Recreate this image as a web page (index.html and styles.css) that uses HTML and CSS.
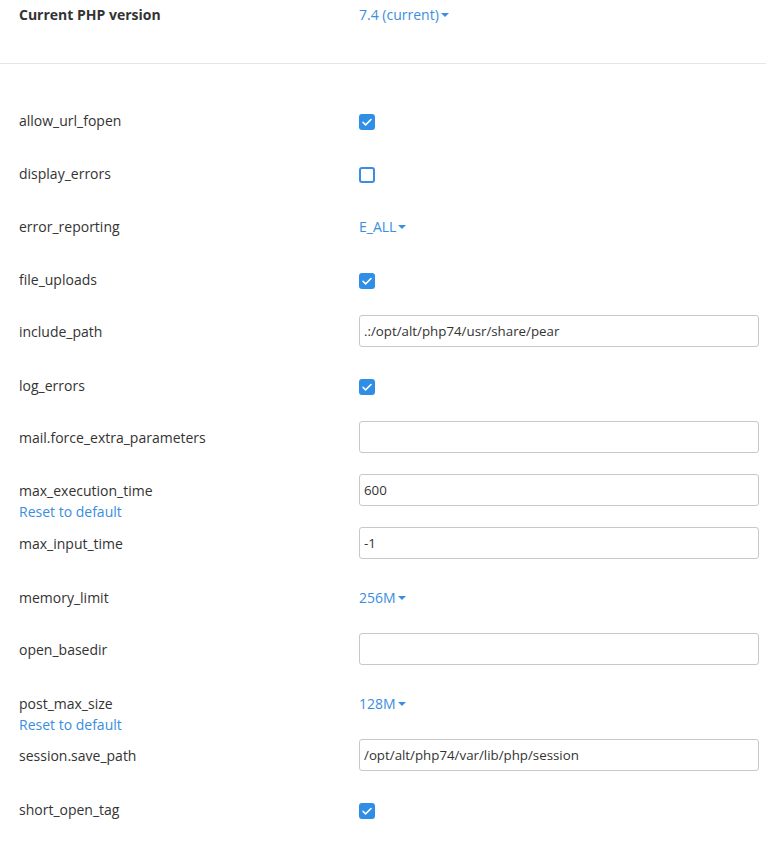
FILE: index.html
```html
<!DOCTYPE html>
<html>
<head>
<meta charset="utf-8">
<link rel="stylesheet" href="styles.css">
</head>
<body>
<div class="page">
  <div class="header">
    <div class="label bold">Current PHP version</div>
    <div class="value"><a class="dropdown">7.4 (current)<span class="caret"></span></a></div>
  </div>
  <div class="divider"></div>
  <div class="list">
    <div class="row"><div class="label">allow_url_fopen</div><div class="value"><span class="cb checked"><svg viewBox="0 0 16 16" width="16" height="16"><path d="M4 8.3l2.6 2.6L12 5.5" fill="none" stroke="#fff" stroke-width="1.6" stroke-linecap="round" stroke-linejoin="round"/></svg></span></div></div>
    <div class="row"><div class="label">display_errors</div><div class="value"><span class="cb"></span></div></div>
    <div class="row"><div class="label">error_reporting</div><div class="value"><a class="dropdown">E_ALL<span class="caret"></span></a></div></div>
    <div class="row"><div class="label">file_uploads</div><div class="value"><span class="cb checked"><svg viewBox="0 0 16 16" width="16" height="16"><path d="M4 8.3l2.6 2.6L12 5.5" fill="none" stroke="#fff" stroke-width="1.6" stroke-linecap="round" stroke-linejoin="round"/></svg></span></div></div>
    <div class="row row-input"><div class="label">include_path</div><div class="value"><input class="text" type="text" value=".:/opt/alt/php74/usr/share/pear"></div></div>
    <div class="row"><div class="label">log_errors</div><div class="value"><span class="cb checked"><svg viewBox="0 0 16 16" width="16" height="16"><path d="M4 8.3l2.6 2.6L12 5.5" fill="none" stroke="#fff" stroke-width="1.6" stroke-linecap="round" stroke-linejoin="round"/></svg></span></div></div>
    <div class="row row-input"><div class="label">mail.force_extra_parameters</div><div class="value"><input class="text" type="text" value=""></div></div>
    <div class="row row-input"><div class="label">max_execution_time<a class="reset">Reset to default</a></div><div class="value"><input class="text" type="text" value="600"></div></div>
    <div class="row row-input"><div class="label">max_input_time</div><div class="value"><input class="text" type="text" value="-1"></div></div>
    <div class="row"><div class="label">memory_limit</div><div class="value"><a class="dropdown">256M<span class="caret"></span></a></div></div>
    <div class="row row-input"><div class="label">open_basedir</div><div class="value"><input class="text" type="text" value=""></div></div>
    <div class="row"><div class="label">post_max_size<a class="reset">Reset to default</a></div><div class="value"><a class="dropdown">128M<span class="caret"></span></a></div></div>
    <div class="row row-input"><div class="label">session.save_path</div><div class="value"><input class="text" type="text" value="/opt/alt/php74/var/lib/php/session"></div></div>
    <div class="row"><div class="label">short_open_tag</div><div class="value"><span class="cb checked"><svg viewBox="0 0 16 16" width="16" height="16"><path d="M4 8.3l2.6 2.6L12 5.5" fill="none" stroke="#fff" stroke-width="1.6" stroke-linecap="round" stroke-linejoin="round"/></svg></span></div></div>
  </div>
</div>
</body>
</html>
```
FILE: styles.css
```css
html, body {
  margin: 0;
  padding: 0;
  background: #fff;
}
body {
  font-family: "Open Sans", "Noto Sans", sans-serif;
  font-size: 14px;
  line-height: 21px;
  color: #333;
}
.page {
  width: 766px;
}
.header {
  display: grid;
  grid-template-columns: 340px 1fr;
  align-items: start;
  padding: 4px 0 0 19px;
  height: 63px;
  box-sizing: border-box;
}
.bold {
  font-weight: 700;
}
.divider {
  height: 1px;
  background: #e6e6e6;
}
.list {
  padding-top: 30px;
}
.row {
  display: grid;
  grid-template-columns: 340px 400px;
  align-items: center;
  height: 53px;
  padding-left: 19px;
  box-sizing: border-box;
}
.row-input {
  padding-bottom: 3px;
}
.label {
  display: flex;
  flex-direction: column;
}
.reset {
  display: block;
  height: 0;
  overflow: visible;
  color: #3a8ee0;
  cursor: pointer;
}
.dropdown {
  color: #3a8ee0;
  cursor: pointer;
  display: inline-flex;
  align-items: center;
}
.caret {
  display: inline-block;
  width: 0;
  height: 0;
  margin-left: 2px;
  margin-top: 1px;
  border-left: 4px solid transparent;
  border-right: 4px solid transparent;
  border-top: 4px solid #3a8ee0;
}
.value {
  display: flex;
  align-items: center;
}
.cb {
  display: inline-flex;
  width: 16px;
  height: 16px;
  box-sizing: border-box;
  border: 2px solid #3a8ee0;
  border-radius: 3px;
  margin-top: 2px;
}
.cb.checked {
  border: none;
  background: #2f8ee6;
}
.text {
  width: 400px;
  height: 32px;
  box-sizing: border-box;
  border: 1px solid #c8c8c8;
  border-radius: 3px;
  padding: 0 4px;
  font-family: "Open Sans", "Noto Sans", sans-serif;
  font-size: 13.3px;
  color: #333;
  outline: none;
  margin: 0;
}
```
